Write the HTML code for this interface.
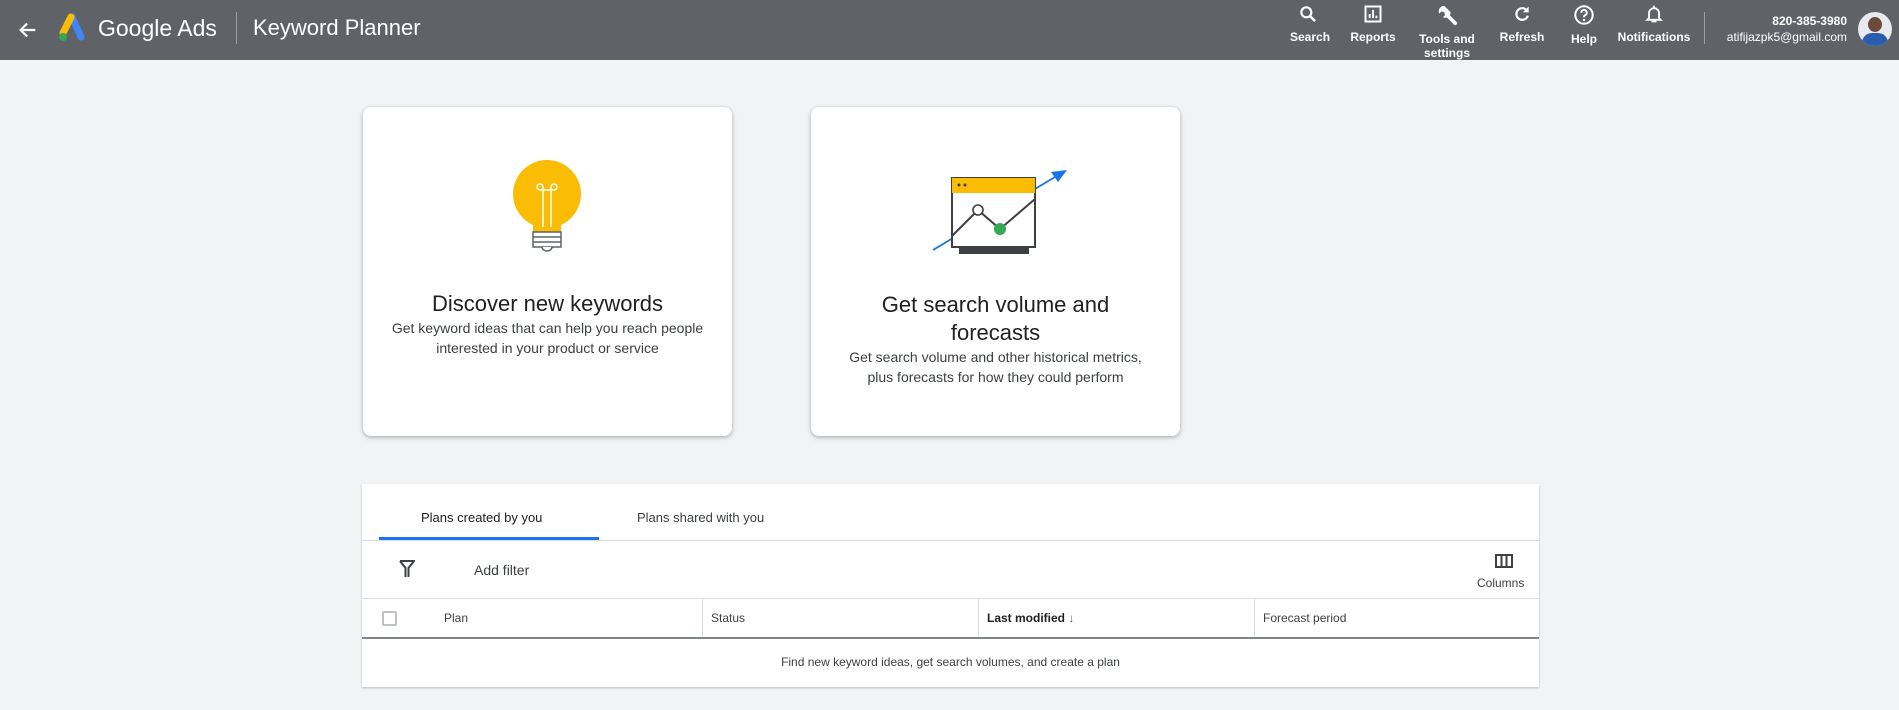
<!DOCTYPE html>
<html><head><meta charset="utf-8"><style>
*{margin:0;padding:0;box-sizing:border-box}
body{width:1899px;height:710px;background:#f1f3f4;font-family:"Liberation Sans",sans-serif;position:relative;overflow:hidden}
.hdr{position:absolute;left:0;top:0;width:1899px;height:60px;background:#5f6368;color:#fff}
.abs{position:absolute}
.nav{position:absolute;top:4px;text-align:center;font-size:12px;font-weight:bold;line-height:14px;color:#fff}
.nav svg{display:block;margin:0 auto 6px}
.card{position:absolute;top:107px;width:369px;height:329px;background:#fff;border-radius:8px;box-shadow:0 1px 3px rgba(60,64,67,.3),0 2px 6px rgba(60,64,67,.15);text-align:center}
.t{font-size:22px;color:#202124;line-height:28px}
.s{font-size:14px;color:#3c4043;line-height:20px}
.panel{position:absolute;left:362px;top:484px;width:1177px;height:203px;background:#fff;box-shadow:0 1px 2px rgba(60,64,67,.3)}
.sm{font-size:13px;color:#3c4043}
</style></head><body>
<div class="hdr">
<svg class="abs" style="left:17px;top:19px" width="22" height="22" viewBox="0 0 24 24"><path d="M20 12H5M11 5l-7 7 7 7" stroke="#fff" stroke-width="2.4" fill="none"/></svg>
<svg class="abs" style="left:56px;top:13px" width="30" height="30" viewBox="0 0 30 30"><path d="M16 4 L25 24" stroke="#4285f4" stroke-width="7" stroke-linecap="round"/><path d="M15 4 L7 20" stroke="#fbbc04" stroke-width="7" stroke-linecap="round"/><circle cx="7" cy="24" r="4" fill="#34a853"/></svg>
<div class="abs" style="left:98px;top:14px;font-size:23px;line-height:28px">Google Ads</div>
<div class="abs" style="left:236px;top:12px;width:1px;height:32px;background:#9aa0a6"></div>
<div class="abs" style="left:253px;top:14px;font-size:22px;line-height:28px">Keyword Planner</div>
<div class="nav" style="left:1290px;width:36px"><svg width="20" height="20" viewBox="0 0 24 24"><circle cx="10" cy="10" r="6" stroke="#fff" stroke-width="2.6" fill="none"/><path d="M14.5 14.5l6 6" stroke="#fff" stroke-width="3"/></svg>Search</div>
<div class="nav" style="left:1350px;width:46px"><svg width="20" height="20" viewBox="0 0 24 24"><rect x="3" y="3" width="18" height="18" stroke="#fff" stroke-width="2.4" fill="none"/><path d="M8 17v-5M12 17V7M16 17v-3" stroke="#fff" stroke-width="2.2"/></svg>Reports</div>
<div class="nav" style="left:1415px;width:64px"><svg width="22" height="22" viewBox="0 0 24 24"><path d="M9 2a6 6 0 0 0-5.5 8.5L6 8l3 1 1 3-2.5 2.5A6 6 0 0 0 16 9z" fill="#fff"/><path d="M12 12l9 9" stroke="#fff" stroke-width="4" stroke-linecap="round"/></svg>Tools and<br>settings</div>
<div class="nav" style="left:1498px;width:48px"><svg width="20" height="20" viewBox="0 0 24 24"><path d="M18 8A7 7 0 1 0 19 14" stroke="#fff" stroke-width="2.6" fill="none"/><path d="M20 3v7h-7z" fill="#fff"/></svg>Refresh</div>
<div class="nav" style="left:1568px;width:32px"><svg width="22" height="22" viewBox="0 0 24 24"><circle cx="12" cy="12" r="9.5" stroke="#fff" stroke-width="2.2" fill="none"/><path d="M9 9.5a3 3 0 1 1 4 2.8c-1 .5-1 1-1 2.2" stroke="#fff" stroke-width="2.2" fill="none"/><circle cx="12" cy="17.5" r="1.3" fill="#fff"/></svg>Help</div>
<div class="nav" style="left:1614px;width:80px"><svg width="20" height="20" viewBox="0 0 24 24"><path d="M6 17V11a6 6 0 0 1 12 0v6l2 2H4z" stroke="#fff" stroke-width="2.2" fill="none"/><path d="M12 2v3" stroke="#fff" stroke-width="2"/><rect x="9" y="20" width="6" height="2" fill="#fff"/></svg>Notifications</div>
<div class="abs" style="left:1704px;top:12px;width:1px;height:32px;background:#9aa0a6"></div>
<div class="abs" style="right:52px;top:13px;text-align:right;font-size:12px;line-height:16px;font-weight:bold">820-385-3980<br><span style="font-weight:normal">atifijazpk5@gmail.com</span></div>
<div class="abs" style="left:1858px;top:12px;width:34px;height:34px;border-radius:50%;background:#e8eaed;overflow:hidden"><div class="abs" style="left:10px;top:5px;width:14px;height:15px;border-radius:50%;background:#6b4a3a"></div><div class="abs" style="left:4px;top:21px;width:26px;height:16px;border-radius:10px 10px 0 0;background:#2a5db0"></div></div>
</div>

<div class="card" style="left:363px">
<svg class="abs" style="left:148px;top:50px" width="76" height="100" viewBox="0 0 76 100"><circle cx="36" cy="37" r="34" fill="#fbbc04"/><rect x="22" y="55" width="28" height="20" fill="#fbbc04"/><path d="M32 70V30M40 70V30M32 30a3 3 0 1 0-3 3M40 30a3 3 0 1 1 3 3M29 33h14" stroke="#fff" stroke-width="1.5" fill="none"/><rect x="22" y="75" width="28" height="15" fill="#fff" stroke="#5f6368" stroke-width="1.5"/><path d="M22 80h28M22 85h28" stroke="#5f6368" stroke-width="1.5"/><path d="M31 90a5 4 0 0 0 10 0" stroke="#5f6368" stroke-width="1.5" fill="#fff"/></svg>
<div class="t abs" style="left:0;right:0;top:183px">Discover new keywords</div>
<div class="s abs" style="left:0;right:0;top:211px">Get keyword ideas that can help you reach people<br>interested in your product or service</div>
</div>

<div class="card" style="left:811px">
<svg class="abs" style="left:0;top:0" width="369" height="160" viewBox="811 107 369 160"><path d="M933 250L1060 174" stroke="#1a73e8" stroke-width="1.8"/><path d="M1067 170l-16 2 7 10z" fill="#1a73e8"/><rect x="952" y="178" width="83" height="69" fill="#fff" stroke="#3c4043" stroke-width="2"/><rect x="952" y="178" width="83" height="15" fill="#fbbc04"/><circle cx="959" cy="185" r="1.5" fill="#3c4043"/><circle cx="965" cy="185" r="1.5" fill="#3c4043"/><rect x="959" y="247" width="70" height="7" fill="#3c4043"/><path d="M952 236L978 210 1000 229 1035 199" stroke="#3c4043" stroke-width="2" fill="none"/><circle cx="978" cy="210" r="5" fill="#fff" stroke="#3c4043" stroke-width="1.6"/><circle cx="1000" cy="229" r="6" fill="#34a853"/></svg>
<div class="t abs" style="left:0;right:0;top:184px">Get search volume and<br>forecasts</div>
<div class="s abs" style="left:0;right:0;top:240px">Get search volume and other historical metrics,<br>plus forecasts for how they could perform</div>
</div>

<div class="panel">
<div class="abs" style="left:59px;top:26px;font-size:13px;color:#202124">Plans created by you</div>
<div class="abs" style="left:275px;top:26px;font-size:13px;color:#3c4043">Plans shared with you</div>
<div class="abs" style="left:17px;top:53px;width:220px;height:3px;background:#1a73e8"></div>
<div class="abs" style="left:0;top:56px;width:1177px;height:1px;background:#dadce0"></div>
<svg class="abs" style="left:37px;top:76px" width="16" height="18" viewBox="0 0 16 18"><path d="M1 1h14L9.5 8v9M6.5 17V8L1 1" stroke="#3c4043" stroke-width="2" fill="none"/></svg>
<div class="abs sm" style="left:112px;top:78px;font-size:14px">Add filter</div>
<svg class="abs" style="left:1133px;top:70px" width="18" height="14" viewBox="0 0 18 14"><rect x="1" y="1" width="16" height="12" stroke="#3c4043" stroke-width="2" fill="none"/><path d="M6.5 1v12M11.5 1v12" stroke="#3c4043" stroke-width="2"/></svg>
<div class="abs" style="left:1115px;top:92px;font-size:12px;color:#3c4043">Columns</div>
<div class="abs" style="left:0;top:114px;width:1177px;height:1px;background:#dadce0"></div>
<div class="abs" style="left:20px;top:127px;width:15px;height:15px;border:2px solid #bdc1c6;border-radius:2px"></div>
<div class="abs sm" style="left:82px;top:127px;font-size:12px">Plan</div>
<div class="abs" style="left:340px;top:114px;width:1px;height:40px;background:#dadce0"></div>
<div class="abs sm" style="left:349px;top:127px;font-size:12px">Status</div>
<div class="abs" style="left:616px;top:114px;width:1px;height:40px;background:#dadce0"></div>
<div class="abs" style="left:625px;top:127px;font-size:12px;color:#202124;font-weight:bold">Last modified <span style="font-weight:normal;color:#5f6368">&#8595;</span></div>
<div class="abs" style="left:892px;top:114px;width:1px;height:40px;background:#dadce0"></div>
<div class="abs sm" style="left:901px;top:127px;font-size:12px">Forecast period</div>
<div class="abs" style="left:0;top:153px;width:1177px;height:2px;background:#80868b"></div>
<div class="abs sm" style="left:0;right:0;top:171px;text-align:center;font-size:12px">Find new keyword ideas, get search volumes, and create a plan</div>
</div>
</body></html>
